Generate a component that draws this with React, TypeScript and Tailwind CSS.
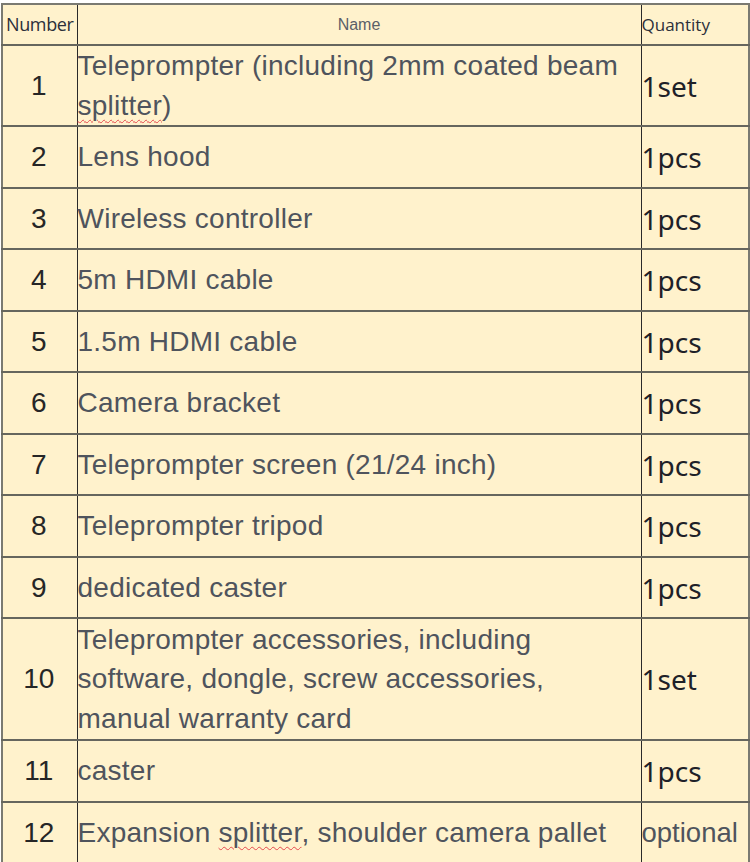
type Item = {
  no: number
  name: React.ReactNode
  qty: string
  qtyPlain?: boolean
  tall?: boolean
}

const Squiggle = ({ children }: { children: React.ReactNode }) => (
  <span className="underline decoration-wavy decoration-[#e5484d] decoration-1 underline-offset-[4px]">
    {children}
  </span>
)

const ITEMS: Item[] = [
  {
    no: 1,
    name: (
      <>
        Teleprompter (including 2mm coated beam <Squiggle>splitter</Squiggle>)
      </>
    ),
    qty: '1set',
  },
  { no: 2, name: 'Lens hood', qty: '1pcs' },
  { no: 3, name: 'Wireless controller', qty: '1pcs' },
  { no: 4, name: '5m HDMI cable', qty: '1pcs' },
  { no: 5, name: '1.5m HDMI cable', qty: '1pcs' },
  { no: 6, name: 'Camera bracket', qty: '1pcs' },
  { no: 7, name: 'Teleprompter screen (21/24 inch)', qty: '1pcs' },
  { no: 8, name: 'Teleprompter tripod', qty: '1pcs' },
  { no: 9, name: 'dedicated caster', qty: '1pcs' },
  {
    no: 10,
    name: 'Teleprompter accessories, including software, dongle, screw accessories, manual warranty card',
    qty: '1set',
    tall: true,
  },
  { no: 11, name: 'caster', qty: '1pcs' },
  {
    no: 12,
    name: (
      <>
        Expansion <Squiggle>splitter</Squiggle>, shoulder camera pallet
      </>
    ),
    qty: 'optional',
    qtyPlain: true,
  },
]

export default function App() {
  return (
    <div className="min-h-screen bg-white pl-[1px] pt-[3px]">
      <table className="w-[747px] table-fixed border-collapse border-2 border-[#7a7a72] bg-[#fff2cc]">
        <colgroup>
          <col className="w-[75px]" />
          <col className="w-[564px]" />
          <col className="w-[108px]" />
        </colgroup>
        <thead>
          <tr className="h-[41px] border-b-2 border-[#66665e]">
            <th className="border-r border-[#2a2a2a] p-0 text-center align-middle font-['Open_Sans',sans-serif] text-[18px] font-normal tracking-[-0.4px] text-[#2b2f3a]">
              Number
            </th>
            <th className="border-r border-[#2a2a2a] p-0 text-center align-middle font-['Liberation_Sans',Arial,sans-serif] text-[16px] font-normal text-[#5a5f68]">
              Name
            </th>
            <th className="p-0 text-left align-middle font-['Open_Sans',sans-serif] text-[17px] font-normal text-[#2b2f3a]">
              Quantity
            </th>
          </tr>
        </thead>
        <tbody>
          {ITEMS.map((it) => (
            <tr
              key={it.no}
              className={[
                'border-b-2 border-[#66665e] last:border-b-0',
                it.no === 1 ? 'h-[80px]' : it.tall ? 'h-[122px]' : 'h-[61.5px]',
              ].join(' ')}
            >
              <td className="border-r border-[#2a2a2a] p-0 pr-[2px] text-center align-middle font-['Liberation_Sans',Arial,sans-serif] text-[28px] leading-[39.5px] text-[#262626]">
                {it.no}
              </td>
              <td className="border-r border-[#2a2a2a] p-0 pr-[4px] align-middle font-['Liberation_Sans',Arial,sans-serif] text-[28px] leading-[39.5px] tracking-[0.25px] text-[#4f545d]">
                {it.name}
              </td>
              <td
                className={[
                  'p-0 align-middle leading-[39.5px]',
                  it.qtyPlain
                    ? "font-['Liberation_Sans',Arial,sans-serif] text-[27.5px] text-[#4f545d]"
                    : "pt-[2px] font-['Noto_Sans',sans-serif] text-[28px] text-[#1e2128]",
                ].join(' ')}
              >
                {it.qty}
              </td>
            </tr>
          ))}
        </tbody>
      </table>
    </div>
  )
}
